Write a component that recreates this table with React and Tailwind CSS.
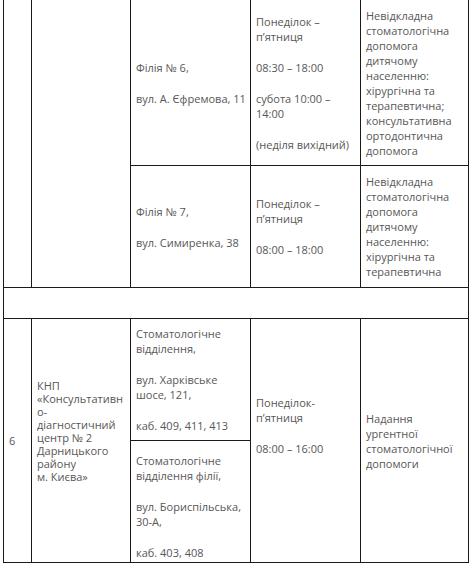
import React from 'react'

const cell = 'border border-[#1a1a1a] px-[5px] align-middle'

const Lines = ({ groups }) => (
    <div className='flex flex-col gap-[16px]'>
        {groups.map((g, i) => (
            <p key={i}>
                {g.map((l, j) => (
                    <span key={j} className='block whitespace-nowrap'>{l}</span>
                ))}
            </p>
        ))}
    </div>
)

const App = () => {
    return (
        <div className='w-[471px] h-[563px] overflow-hidden bg-white'>
            <table
                className='table-fixed border-collapse ml-[3px] -mt-px w-[465px] text-[11px] leading-[15px] text-[#575757]'
                style={{ fontFamily: '"Open Sans", "Noto Sans", sans-serif' }}
            >
                <colgroup>
                    <col className='w-[28px]' />
                    <col className='w-[99px]' />
                    <col className='w-[120px]' />
                    <col className='w-[110px]' />
                    <col className='w-[108px]' />
                </colgroup>
                <tbody>
                    <tr className='h-[166px]'>
                        <td rowSpan={2} className={cell}></td>
                        <td rowSpan={2} className={cell}></td>
                        <td className={cell}>
                            <Lines groups={[['Філія № 6,'], ['вул. А. Єфремова, 11']]} />
                        </td>
                        <td className={cell}>
                            <Lines groups={[['Понеділок –', 'п’ятниця'], ['08:30 – 18:00'], ['субота 10:00 –', '14:00'], ['(неділя вихідний)']]} />
                        </td>
                        <td className={cell}>
                            <Lines groups={[['Невідкладна', 'стоматологічна', 'допомога', 'дитячому', 'населенню:', 'хірургічна та', 'терапевтична;', 'консультативна', 'ортодонтична', 'допомога']]} />
                        </td>
                    </tr>
                    <tr className='h-[122px]'>
                        <td className={cell}>
                            <Lines groups={[['Філія № 7,'], ['вул. Симиренка, 38']]} />
                        </td>
                        <td className={cell}>
                            <Lines groups={[['Понеділок –', 'п’ятниця'], ['08:00 – 18:00']]} />
                        </td>
                        <td className={cell}>
                            <Lines groups={[['Невідкладна', 'стоматологічна', 'допомога', 'дитячому', 'населенню:', 'хірургічна та', 'терапевтична']]} />
                        </td>
                    </tr>
                    <tr className='h-[31px]'>
                        <td colSpan={5} className={cell}></td>
                    </tr>
                    <tr className='h-[122px]'>
                        <td rowSpan={2} className={cell}>6</td>
                        <td rowSpan={2} className={cell + ' leading-[13px] pb-[20px]'}>
                            <Lines groups={[['КНП', '«Консультативн', 'о-', 'діагностичний', 'центр № 2', 'Дарницького', 'району', 'м. Києва»']]} />
                        </td>
                        <td className={cell}>
                            <Lines groups={[['Стоматологічне', 'відділення,'], ['вул. Харківське', 'шосе, 121,'], ['каб. 409, 411, 413']]} />
                        </td>
                        <td rowSpan={2} className={cell}>
                            <Lines groups={[['Понеділок-', 'п’ятниця'], ['08:00 – 16:00'], ['\u00a0']]} />
                        </td>
                        <td rowSpan={2} className={cell}>
                            <Lines groups={[['Надання', 'ургентної', 'стоматологічної', 'допомоги']]} />
                        </td>
                    </tr>
                    <tr className='h-[122px]'>
                        <td className={cell + ' pt-[10px]'}>
                            <Lines groups={[['Стоматологічне', 'відділення філії,'], ['вул. Бориспільська,', '30-А,'], ['каб. 403, 408']]} />
                        </td>
                    </tr>
                </tbody>
            </table>
        </div>
    )
}

export default App
